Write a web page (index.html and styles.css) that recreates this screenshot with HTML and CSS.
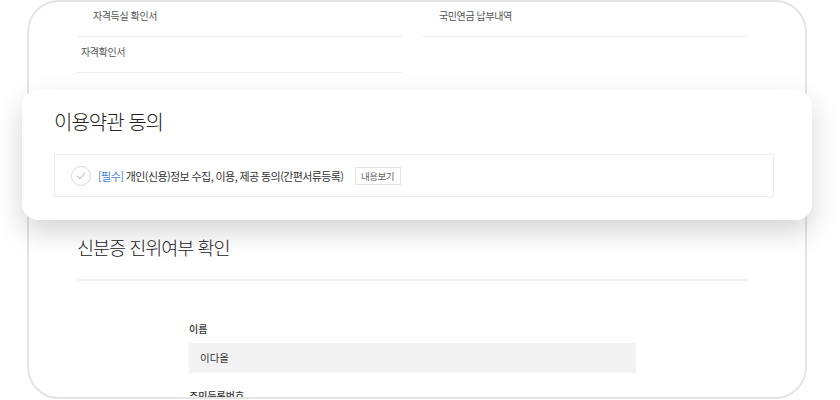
FILE: index.html
```html
<!DOCTYPE html>
<html lang="ko">
<head>
    <meta charset="UTF-8">
    <meta name="viewport" content="width=device-width, initial-scale=1.0">
    <title>이용약관 동의</title>
    <link rel="stylesheet" href="styles.css">
</head>
<body>
    <div class="frame">
        <ul class="doc-list">
            <li class="doc first">자격득실 확인서</li>
            <li class="doc first">국민연금 납부내역</li>
            <li class="doc second">자격확인서</li>
        </ul>

        <section class="verify">
            <h2 class="verify-title">신분증 진위여부 확인</h2>
            <div class="form">
                <label class="field-label">이름</label>
                <div class="field-input">이다올</div>
                <label class="field-label next">주민등록번호</label>
            </div>
        </section>
    </div>

    <div class="terms-card">
        <h2 class="terms-title">이용약관 동의</h2>
        <div class="terms-box">
            <span class="check">
                <svg width="10" height="8" viewBox="0 0 10 8"><path d="M1 4 L3.8 6.6 L9 1.2" fill="none" stroke="#c8c8c8" stroke-width="1.2"/></svg>
            </span>
            <span class="terms-text"><em>[필수]</em> 개인(신용)정보 수집, 이용, 제공 동의(간편서류등록)</span>
            <button class="view-btn">내용보기</button>
        </div>
    </div>
</body>
</html>
```

FILE: styles.css
```css
* {
    margin: 0;
    padding: 0;
    box-sizing: border-box;
}

body {
    font-family: "Noto Sans CJK KR", "Noto Sans", sans-serif;
    width: 840px;
    height: 400px;
    overflow: hidden;
    background: #ffffff;
    color: #222;
}

.frame {
    margin-left: 27px;
    width: 780px;
    height: 399px;
    padding: 0 57px 0 48px;
    border: 2px solid #e4e4e4;
    border-radius: 32px;
    overflow: hidden;
    background: #fff;
}

.doc-list {
    list-style: none;
    display: grid;
    grid-template-columns: 325px 325px;
    column-gap: 21px;
}

.doc {
    font-size: 10px;
    line-height: 16px;
    color: #555;
    letter-spacing: -0.4px;
    padding: 6px 0 12px 16px;
    border-bottom: 1px solid #eeeeee;
}

.doc.second {
    padding-top: 7px;
    padding-left: 4px;
}

.verify {
    margin-top: 159px;
}

.verify-title {
    font-size: 18.5px;
    font-weight: 300;
    line-height: 30px;
    letter-spacing: -1px;
    color: #222;
    padding-bottom: 17px;
    border-bottom: 2px solid #f2f2f2;
}

.form {
    padding-left: 112px;
    padding-top: 40px;
}

.field-label {
    display: block;
    font-size: 10px;
    line-height: 16px;
    color: #333;
    font-weight: 500;
}

.field-input {
    margin-top: 6px;
    width: 447px;
    height: 30px;
    padding-left: 11px;
    background: #f3f3f3;
    font-size: 10.5px;
    line-height: 30px;
    color: #333;
}

.field-label.next {
    margin-top: 15px;
}

.terms-card {
    position: absolute;
    left: 22px;
    top: 90px;
    width: 790px;
    height: 130px;
    padding: 17px 38px 0 32px;
    background: #fff;
    border-radius: 16px;
    box-shadow: 0 12px 28px rgba(0, 0, 0, 0.17);
}

.terms-title {
    font-size: 20px;
    font-weight: 300;
    line-height: 30px;
    letter-spacing: -1px;
    color: #222;
}

.terms-box {
    margin-top: 17px;
    height: 43px;
    border: 1px solid #ececec;
    display: flex;
    align-items: center;
    padding-left: 16px;
}

.check {
    width: 20px;
    height: 20px;
    border: 1px solid #dcdcdc;
    border-radius: 50%;
    display: flex;
    align-items: center;
    justify-content: center;
    margin-right: 7px;
}

.terms-text {
    font-size: 11px;
    color: #333;
    letter-spacing: -0.6px;
}

.terms-text em {
    font-style: normal;
    color: #3d7fd6;
}

.view-btn {
    margin-left: 11px;
    width: 46px;
    height: 18px;
    border: 1px solid #e4e4e4;
    background: #fff;
    font-family: inherit;
    font-size: 9.5px;
    color: #666;
    letter-spacing: -0.5px;
}
```
